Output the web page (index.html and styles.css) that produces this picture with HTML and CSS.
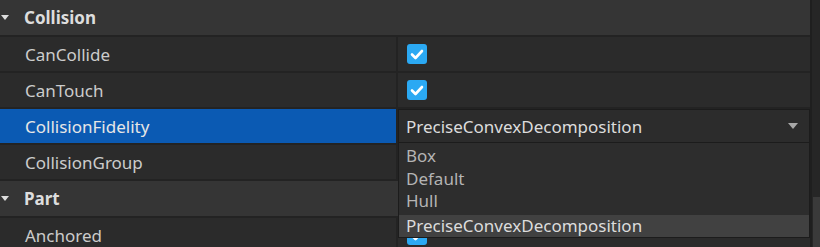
FILE: index.html
```html
<!DOCTYPE html>
<html lang="en">
<head>
    <meta charset="UTF-8">
    <title>Properties</title>
    <link rel="stylesheet" href="styles.css">
</head>
<body>

<div class="panel">
    <div class="props">
        <div class="group"><span class="arrow"></span>Collision</div>
        <div class="row">
            <div class="name">CanCollide</div>
            <div class="value"><span class="check"><svg viewBox="0 0 20 20"><path d="M5 10.5 L8.5 14 L15 7" /></svg></span></div>
        </div>
        <div class="row">
            <div class="name">CanTouch</div>
            <div class="value"><span class="check"><svg viewBox="0 0 20 20"><path d="M5 10.5 L8.5 14 L15 7" /></svg></span></div>
        </div>
        <div class="row selected">
            <div class="name">CollisionFidelity</div>
            <div class="value">
                <div class="dropdown">
                    <span>PreciseConvexDecomposition</span>
                    <span class="caret"></span>
                </div>
                <ul class="options">
                    <li>Box</li>
                    <li>Default</li>
                    <li>Hull</li>
                    <li class="active">PreciseConvexDecomposition</li>
                </ul>
            </div>
        </div>
        <div class="row">
            <div class="name">CollisionGroup</div>
            <div class="value"></div>
        </div>
        <div class="group"><span class="arrow"></span>Part</div>
        <div class="row">
            <div class="name">Anchored</div>
            <div class="value"><span class="check"><svg viewBox="0 0 20 20"><path d="M5 10.5 L8.5 14 L15 7" /></svg></span></div>
        </div>
    </div>
    <div class="scrollbar"><div class="thumb"></div></div>
</div>

</body>
</html>
```

FILE: styles.css
```css
body {
    margin: 0;
    background-color: #2b2b2b;
    font-family: "Noto Sans", "DejaVu Sans", sans-serif;
    font-size: 17px;
    color: #cccccc;
    overflow: hidden;
}
.panel {
    display: flex;
    height: 247px;
}
.props {
    width: 810px;
    border-right: 2px solid #1f1f1f;
}
.group {
    display: flex;
    align-items: center;
    height: 35px;
    background-color: #353535;
    border-bottom: 2px solid #232323;
    font-weight: bold;
    color: #dddddd;
}
.arrow {
    width: 0;
    height: 0;
    margin: 0 15px 0 1px;
    border-left: 4px solid transparent;
    border-right: 4px solid transparent;
    border-top: 5px solid #dddddd;
}
.row {
    display: flex;
    height: 34px;
    border-bottom: 2px solid #232323;
    background-color: #2b2b2b;
}
.name {
    width: 371px;
    padding-left: 25px;
    display: flex;
    align-items: center;
    border-right: 2px solid #232323;
}
.selected .name {
    background-color: #0b5ab3;
    color: #e6e6e6;
}
.value {
    flex: 1;
    display: flex;
    align-items: center;
    padding-left: 9px;
    position: relative;
}
.check {
    width: 20px;
    height: 20px;
    border-radius: 3px;
    background-color: #2ba9f3;
    display: flex;
}
.check svg {
    width: 20px;
    height: 20px;
}
.check path {
    fill: none;
    stroke: #ffffff;
    stroke-width: 2.6;
    stroke-linecap: round;
    stroke-linejoin: round;
}
.selected .value {
    padding-left: 0;
}
.dropdown {
    flex: 1;
    height: 100%;
    box-sizing: border-box;
    display: flex;
    align-items: center;
    justify-content: space-between;
    padding: 0 9px 0 7px;
    background-color: #2c2c2c;
    border: 1px solid #1c1c1c;
    color: #dcdcdc;
}
.caret {
    width: 0;
    height: 0;
    border-left: 5px solid transparent;
    border-right: 5px solid transparent;
    border-top: 6px solid #a8a8a8;
    margin-right: 2px;
}
.options {
    position: absolute;
    left: 0;
    right: 0;
    top: 34px;
    margin: 0;
    padding: 2px 0 0 0;
    list-style: none;
    background-color: #2d2d2d;
    border: 1px solid #1c1c1c;
    border-top: none;
    z-index: 2;
}
.options li {
    height: 22.5px;
    line-height: 22px;
    padding-left: 7px;
    color: #b4b4b4;
}
.options li.active {
    background-color: #414141;
    color: #dcdcdc;
    margin-top: 2px;
}
.scrollbar {
    flex: 1;
    display: flex;
    flex-direction: column;
    justify-content: flex-end;
    background-color: #262626;
}
.thumb {
    height: 50px;
    margin-left: 1px;
    background-color: #3a3a3a;
}
```
